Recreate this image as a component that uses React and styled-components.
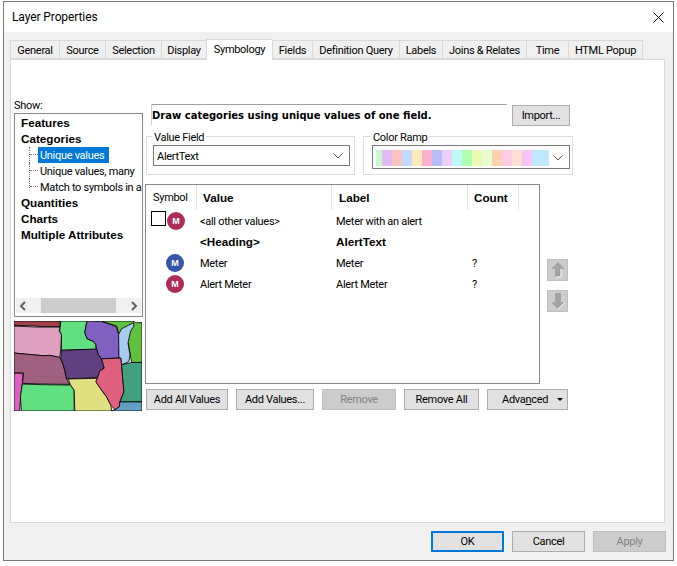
import React from "react";
import styled, { createGlobalStyle } from "styled-components";

const GlobalStyle = createGlobalStyle`
  html, body {
    margin: 0;
    background: #fff;
  }
  * {
    box-sizing: border-box;
  }
`;

const UI_FONT = `Roboto, "Open Sans", sans-serif`;
const BOLD_FONT = `"Liberation Sans", Arial, sans-serif`;

const Page = styled.div`
  padding: 1px 0 0 3px;
  font-family: ${UI_FONT};
  font-size: 11px;
  letter-spacing: -0.3px;
  color: #000;
`;

const Dialog = styled.div`
  width: 671px;
  height: 560px;
  border: 1px solid #7a7a7a;
  background: #f0f0f0;
  display: flex;
  flex-direction: column;
`;

const TitleBar = styled.div`
  height: 30px;
  flex: none;
  background: #fff;
  display: flex;
  align-items: center;
  justify-content: space-between;
  padding: 0 9px 0 8px;
  font-size: 12px;
  letter-spacing: -0.1px;
`;

const TabStrip = styled.div`
  display: flex;
  align-items: flex-end;
  height: 27px;
  flex: none;
  padding-left: 7px;
  position: relative;
  z-index: 1;
`;

const Tab = styled.div`
  width: ${(p) => p.$w}px;
  height: ${(p) => (p.$active ? 21 : 19)}px;
  margin-bottom: ${(p) => (p.$active ? -1 : 0)}px;
  padding: ${(p) => (p.$active ? "0 0 2px" : "2px 0 0")};
  background: ${(p) => (p.$active ? "#fff" : "#f0f0f0")};
  border: 1px solid #d9d9d9;
  border-bottom: ${(p) => (p.$active ? "none" : "1px solid #d9d9d9")};
  margin-left: -1px;
  display: flex;
  align-items: center;
  justify-content: center;
  white-space: nowrap;
`;

const Panel = styled.div`
  margin-left: 6px;
  width: 655px;
  height: 464px;
  flex: none;
  background: #fff;
  border: 1px solid #d9d9d9;
  display: grid;
  grid-template-columns: 129px 1fr;
  column-gap: 2px;
  padding-left: 3px;
`;

const LeftColumn = styled.div`
  padding-top: 38px;
  display: flex;
  flex-direction: column;
`;

const ShowLabel = styled.div`
  height: 15px;
  line-height: 15px;
`;

const TreeBox = styled.div`
  width: 129px;
  height: 204px;
  border: 1px solid #828790;
  display: flex;
  flex-direction: column;
  padding-top: 1px;
  overflow: hidden;
`;

const TreeItems = styled.div`
  flex: 1;
`;

const TreeHeading = styled.div`
  height: 16px;
  line-height: 16px;
  padding-left: 6px;
  font-family: ${BOLD_FONT};
  font-weight: 700;
  font-size: 11.7px;
  letter-spacing: 0;
`;

const TreeChild = styled.div`
  height: 16px;
  display: flex;
  padding-left: 14px;
  white-space: nowrap;
`;

const Branch = styled.span`
  flex: none;
  width: 9px;
  height: ${(p) => (p.$last ? 9 : 16)}px;
  border-left: 1px dotted #777;
  display: flex;
  align-items: flex-end;
  &::after {
    content: "";
    display: block;
    width: 100%;
    height: ${(p) => (p.$last ? 1 : 8)}px;
    border-top: 1px dotted #777;
  }
`;

const TreeLabel = styled.span`
  height: 16px;
  line-height: 17px;
  padding: 0 ${(p) => (p.$selected ? 5 : 2)}px 0 2px;
  background: ${(p) => (p.$selected ? "#0078d7" : "transparent")};
  color: ${(p) => (p.$selected ? "#fff" : "#000")};
`;

const ScrollBar = styled.div`
  height: 15px;
  margin: 0 1px 3px;
  background: #f0f0f0;
  display: flex;
  align-items: center;
  justify-content: space-between;
  padding: 0 3px;
`;

const ScrollThumb = styled.div`
  width: 75px;
  height: 15px;
  background: #cdcdcd;
`;

const MapFrame = styled.svg`
  display: block;
  margin-top: 4px;
  width: 128px;
  height: 90px;
`;

const RightColumn = styled.div`
  padding-top: 44px;
  display: flex;
  flex-direction: column;
`;

const HeadRow = styled.div`
  display: flex;
  gap: 5px;
  padding-left: 6px;
`;

const DrawBox = styled.div`
  width: 356px;
  height: 21px;
  border-top: 1px solid #a0a0a0;
  border-left: 1px solid #d0d0d0;
  font-family: "DejaVu Sans", sans-serif;
  font-weight: 700;
  font-size: 10px;
  letter-spacing: 0;
  line-height: 22px;
  padding-left: 0;
  white-space: nowrap;
`;

const Button = styled.div`
  width: ${(p) => p.$w}px;
  height: 21px;
  margin-top: ${(p) => p.$top || 0}px;
  flex: none;
  display: flex;
  align-items: center;
  justify-content: center;
  background: ${(p) => (p.$disabled ? "#cccccc" : "#e1e1e1")};
  color: ${(p) => (p.$disabled ? "#838383" : "#000")};
  border: ${(p) =>
    p.$primary ? "2px solid #0078d7" : `1px solid ${p.$disabled ? "#bfbfbf" : "#adadad"}`};
  white-space: nowrap;
`;

const GroupRow = styled.div`
  display: flex;
  gap: 8px;
  padding-left: 1px;
  margin-top: 3px;
`;

const Group = styled.fieldset`
  margin: 0;
  padding: 2px 0 0 ${(p) => p.$inset}px;
  width: ${(p) => p.$w}px;
  height: 46px;
  border: 1px solid #dcdcdc;
  min-width: 0;
`;

const GroupTitle = styled.legend`
  margin-left: -1px;
  padding: 0 2px;
  line-height: 18px;
  height: 14px;
`;

const Select = styled.div`
  width: ${(p) => p.$w}px;
  height: ${(p) => p.$h}px;
  border: 1px solid #7a7a7a;
  background: #fff;
  display: flex;
  align-items: center;
  justify-content: space-between;
  padding: 1px 6px 0 3px;
`;

const SelectText = styled.span`
  padding-top: 1px;
`;

const Ramp = styled.div`
  display: flex;
  height: 16px;
`;

const Swatch = styled.span`
  display: block;
  width: ${(p) => p.$w}px;
  background: ${(p) => p.$c};
`;

const TableRow = styled.div`
  display: flex;
  margin-top: 9px;
`;

const Table = styled.div`
  width: 395px;
  height: 200px;
  border: 1px solid #828790;
`;

const Columns = styled.div`
  display: grid;
  grid-template-columns: 51px 135px 136px 51px;
  align-items: center;
`;

const HeaderRow = styled(Columns)`
  height: 25px;
`;

const HeaderCell = styled.div`
  height: 25px;
  line-height: 25px;
  padding-left: ${(p) => p.$pad ?? 7}px;
  border-right: 1px solid #e5e5e5;
  font-family: ${(p) => (p.$plain ? UI_FONT : BOLD_FONT)};
  font-weight: ${(p) => (p.$plain ? 400 : 700)};
  font-size: ${(p) => (p.$plain ? 11 : 11.7)}px;
  letter-spacing: ${(p) => (p.$plain ? "-0.3px" : "0")};
`;

const BodyRow = styled(Columns)`
  height: 21px;
`;

const SymbolCell = styled.div`
  display: flex;
  align-items: center;
  padding-left: ${(p) => (p.$check ? 5 : 20)}px;
  gap: 1px;
`;

const CheckBox = styled.span`
  width: 15px;
  height: 15px;
  border: 1px solid #000;
  background: #fff;
  margin-top: -4px;
`;

const Marker = styled.span`
  width: 18px;
  height: 18px;
  border-radius: 50%;
  background: ${(p) => p.$c};
  color: #fff;
  font-family: ${BOLD_FONT};
  font-weight: 700;
  font-size: 9px;
  letter-spacing: 0;
  display: flex;
  align-items: center;
  justify-content: center;
`;

const Cell = styled.div`
  padding: ${(p) => (p.$bold ? 0 : 1)}px 0 0 ${(p) => p.$pad}px;
  font-family: ${(p) => (p.$bold ? BOLD_FONT : UI_FONT)};
  font-weight: ${(p) => (p.$bold ? 700 : 400)};
  font-size: ${(p) => (p.$bold ? 11.7 : 11)}px;
  letter-spacing: ${(p) => (p.$bold ? "0" : "-0.3px")};
  white-space: nowrap;
`;

const MoveColumn = styled.div`
  display: flex;
  flex-direction: column;
  gap: 9px;
  padding: 75px 0 0 7px;
`;

const MoveButton = styled.div`
  width: 21px;
  height: 22px;
  background: #cccccc;
  border: 1px solid #bfbfbf;
  display: flex;
  align-items: center;
  justify-content: center;
`;

const ActionRow = styled.div`
  display: flex;
  gap: 8px;
  padding-left: 1px;
  margin-top: 5px;
`;

const AdvancedButton = styled(Button)`
  justify-content: flex-start;
  padding-left: 14px;
  gap: 9px;
`;

const DropTriangle = styled.span`
  width: 0;
  height: 0;
  border-left: 3px solid transparent;
  border-right: 3px solid transparent;
  border-top: 3px solid #000;
`;

const Footer = styled.div`
  display: flex;
  justify-content: flex-end;
  gap: 8px;
  padding: 8px 7px 0 0;
`;

const Chevron = ({ w = 10 }) => (
  <svg width={w} height="6" viewBox="0 0 10 6" fill="none" stroke="#555" strokeWidth="1">
    <path d="M0.5 0.5 L5 5 L9.5 0.5" />
  </svg>
);

const ScrollArrow = ({ left }) => (
  <svg width="7" height="10" viewBox="0 0 7 10" fill="none" stroke="#606060" strokeWidth="2">
    <path d={left ? "M6 1 L2 5 L6 9" : "M1 1 L5 5 L1 9"} />
  </svg>
);

const UpArrow = () => (
  <svg width="14" height="16" viewBox="0 0 14 16">
    <path d="M7 0 L14 7 L10 7 L10 15 L4 15 L4 7 L0 7 Z" fill="#a3a3a3" />
    <path d="M10 7 L10 15 L5 15" fill="none" stroke="#fff" strokeWidth="1" />
  </svg>
);

const DownArrow = () => (
  <svg width="14" height="16" viewBox="0 0 14 16">
    <path d="M7 16 L14 9 L10 9 L10 0 L4 0 L4 9 L0 9 Z" fill="#a3a3a3" />
    <path d="M14 9.5 L7 16" fill="none" stroke="#fff" strokeWidth="1" />
  </svg>
);

const regions = [
  ["#a04048", "43,95 181,95 181,112 113,112 113,110 43,108"],
  ["#e0a0c0", "43,110 113,113 181,113 178,125 185,135 183,180 180,203 150,197 130,198 43,190"],
  ["#60e080", "183,95 262,95 258,110 255,130 262,148 280,155 288,165 288,180 240,180 185,182 185,135 180,125"],
  ["#60c040", "305,95 395,95 410,100 426,100 426,218 395,218 385,160 358,135 350,110"],
  ["#8060c0", "262,95 305,97 330,105 350,112 352,125 358,135 357,205 305,207 295,195 290,178 288,165 280,155 262,148 255,130 258,110"],
  ["#a8ccf0", "356,135 365,118 385,108 400,100 402,110 392,125 384,160 390,195 387,215 365,225 362,205 357,205"],
  ["#604080", "185,182 240,180 290,178 295,195 305,207 313,235 300,243 293,263 200,267 195,245 190,225 183,205"],
  ["#a06080", "43,190 130,198 150,197 180,203 190,225 195,245 200,267 210,283 130,282 68,280 72,250 43,248"],
  ["#e060c0", "43,250 70,250 68,280 63,320 60,362 43,362"],
  ["#60e080", "68,282 130,284 212,285 223,300 223,362 65,362 62,320"],
  ["#e0e080", "205,267 293,265 288,275 305,300 320,320 333,345 335,362 225,362 223,300 212,285"],
  ["#e06080", "305,207 362,205 365,225 368,260 372,305 360,335 358,350 345,358 333,345 320,320 305,300 288,275 293,263 300,243 313,235"],
  ["#40a080", "365,225 395,218 426,218 426,335 395,335 360,335 372,305 368,260"],
  ["#60a0c0", "345,358 358,350 360,335 426,335 426,362 335,362"],
];

const rampColors = [
  ["#c8f7d0", 6], ["#e4b8f5", 10], ["#fcc4c0", 10], ["#c2dafc", 10], ["#fdeab8", 10],
  ["#fbb0d0", 10], ["#b8bef5", 10], ["#ead0f8", 10], ["#bff8f8", 10], ["#b0fcb0", 10],
  ["#e8fbb0", 10], ["#eafbd0", 10], ["#fdd0b0", 10], ["#fccce4", 10], ["#fde0d4", 10],
  ["#f8c4f8", 10], ["#c0e8fc", 17],
];

const tabs = [
  ["General", 50], ["Source", 47], ["Selection", 57], ["Display", 46], ["Symbology", 67],
  ["Fields", 41], ["Definition Query", 88], ["Labels", 44], ["Joins & Relates", 85],
  ["Time", 43], ["HTML Popup", 75],
];

export default function App() {
  return (
    <Page>
      <GlobalStyle />
      <Dialog>
        <TitleBar>
          <span>Layer Properties</span>
          <svg width="11" height="11" viewBox="0 0 11 11" stroke="#111" strokeWidth="1">
            <path d="M0.5 0.5 L10.5 10.5 M10.5 0.5 L0.5 10.5" />
          </svg>
        </TitleBar>
        <TabStrip>
          {tabs.map(([name, w]) => (
            <Tab key={name} $w={w} $active={name === "Symbology"}>
              {name}
            </Tab>
          ))}
        </TabStrip>
        <Panel>
          <LeftColumn>
            <ShowLabel>Show:</ShowLabel>
            <TreeBox>
              <TreeItems>
                <TreeHeading>Features</TreeHeading>
                <TreeHeading>Categories</TreeHeading>
                <TreeChild>
                  <Branch />
                  <TreeLabel $selected>Unique values</TreeLabel>
                </TreeChild>
                <TreeChild>
                  <Branch />
                  <TreeLabel>Unique values, many</TreeLabel>
                </TreeChild>
                <TreeChild>
                  <Branch $last />
                  <TreeLabel>Match to symbols in a</TreeLabel>
                </TreeChild>
                <TreeHeading>Quantities</TreeHeading>
                <TreeHeading>Charts</TreeHeading>
                <TreeHeading>Multiple Attributes</TreeHeading>
              </TreeItems>
              <ScrollBar>
                <ScrollArrow left />
                <ScrollThumb />
                <ScrollArrow />
              </ScrollBar>
            </TreeBox>
            <MapFrame viewBox="43 95 383 267" preserveAspectRatio="none">
              <rect x="43" y="95" width="383" height="267" fill="#fff" />
              {regions.map(([fill, points]) => (
                <polygon key={points} points={points} fill={fill} stroke="#000" strokeWidth="2.5" strokeLinejoin="round" />
              ))}
            </MapFrame>
          </LeftColumn>
          <RightColumn>
            <HeadRow>
              <DrawBox>Draw categories using unique values of one field.</DrawBox>
              <Button $w={58} $top={1}>Import...</Button>
            </HeadRow>
            <GroupRow>
              <Group $w={209} $inset={6}>
                <GroupTitle>Value Field</GroupTitle>
                <Select $w={197} $h={21}>
                  <SelectText>AlertText</SelectText>
                  <Chevron />
                </Select>
              </Group>
              <Group $w={210} $inset={8}>
                <GroupTitle>Color Ramp</GroupTitle>
                <Select $w={198} $h={24}>
                  <Ramp>
                    {rampColors.map(([c, w], i) => (
                      <Swatch key={i} $c={c} $w={w} />
                    ))}
                  </Ramp>
                  <Chevron />
                </Select>
              </Group>
            </GroupRow>
            <TableRow>
              <Table>
                <HeaderRow>
                  <HeaderCell $plain $pad={7}>Symbol</HeaderCell>
                  <HeaderCell $pad={6}>Value</HeaderCell>
                  <HeaderCell $pad={7}>Label</HeaderCell>
                  <HeaderCell $pad={6}>Count</HeaderCell>
                </HeaderRow>
                <BodyRow>
                  <SymbolCell $check>
                    <CheckBox />
                    <Marker $c="#ad2c59">M</Marker>
                  </SymbolCell>
                  <Cell $pad={3}>&lt;all other values&gt;</Cell>
                  <Cell $pad={4}>Meter with an alert</Cell>
                  <Cell $pad={4} />
                </BodyRow>
                <BodyRow>
                  <SymbolCell />
                  <Cell $pad={3} $bold>&lt;Heading&gt;</Cell>
                  <Cell $pad={4} $bold>AlertText</Cell>
                  <Cell $pad={4} />
                </BodyRow>
                <BodyRow>
                  <SymbolCell>
                    <Marker $c="#3754ab">M</Marker>
                  </SymbolCell>
                  <Cell $pad={3}>Meter</Cell>
                  <Cell $pad={4}>Meter</Cell>
                  <Cell $pad={4}>?</Cell>
                </BodyRow>
                <BodyRow>
                  <SymbolCell>
                    <Marker $c="#ad2c59">M</Marker>
                  </SymbolCell>
                  <Cell $pad={3}>Alert Meter</Cell>
                  <Cell $pad={4}>Alert Meter</Cell>
                  <Cell $pad={4}>?</Cell>
                </BodyRow>
              </Table>
              <MoveColumn>
                <MoveButton><UpArrow /></MoveButton>
                <MoveButton><DownArrow /></MoveButton>
              </MoveColumn>
            </TableRow>
            <ActionRow>
              <Button $w={82}>Add All Values</Button>
              <Button $w={78}>Add Values...</Button>
              <Button $w={74} $disabled>Remove</Button>
              <Button $w={75}>Remove All</Button>
              <AdvancedButton $w={81}>
                <span>Adva<u>n</u>ced</span>
                <DropTriangle />
              </AdvancedButton>
            </ActionRow>
          </RightColumn>
        </Panel>
        <Footer>
          <Button $w={73} $primary>OK</Button>
          <Button $w={73}>Cancel</Button>
          <Button $w={73} $disabled>Apply</Button>
        </Footer>
      </Dialog>
    </Page>
  );
}
